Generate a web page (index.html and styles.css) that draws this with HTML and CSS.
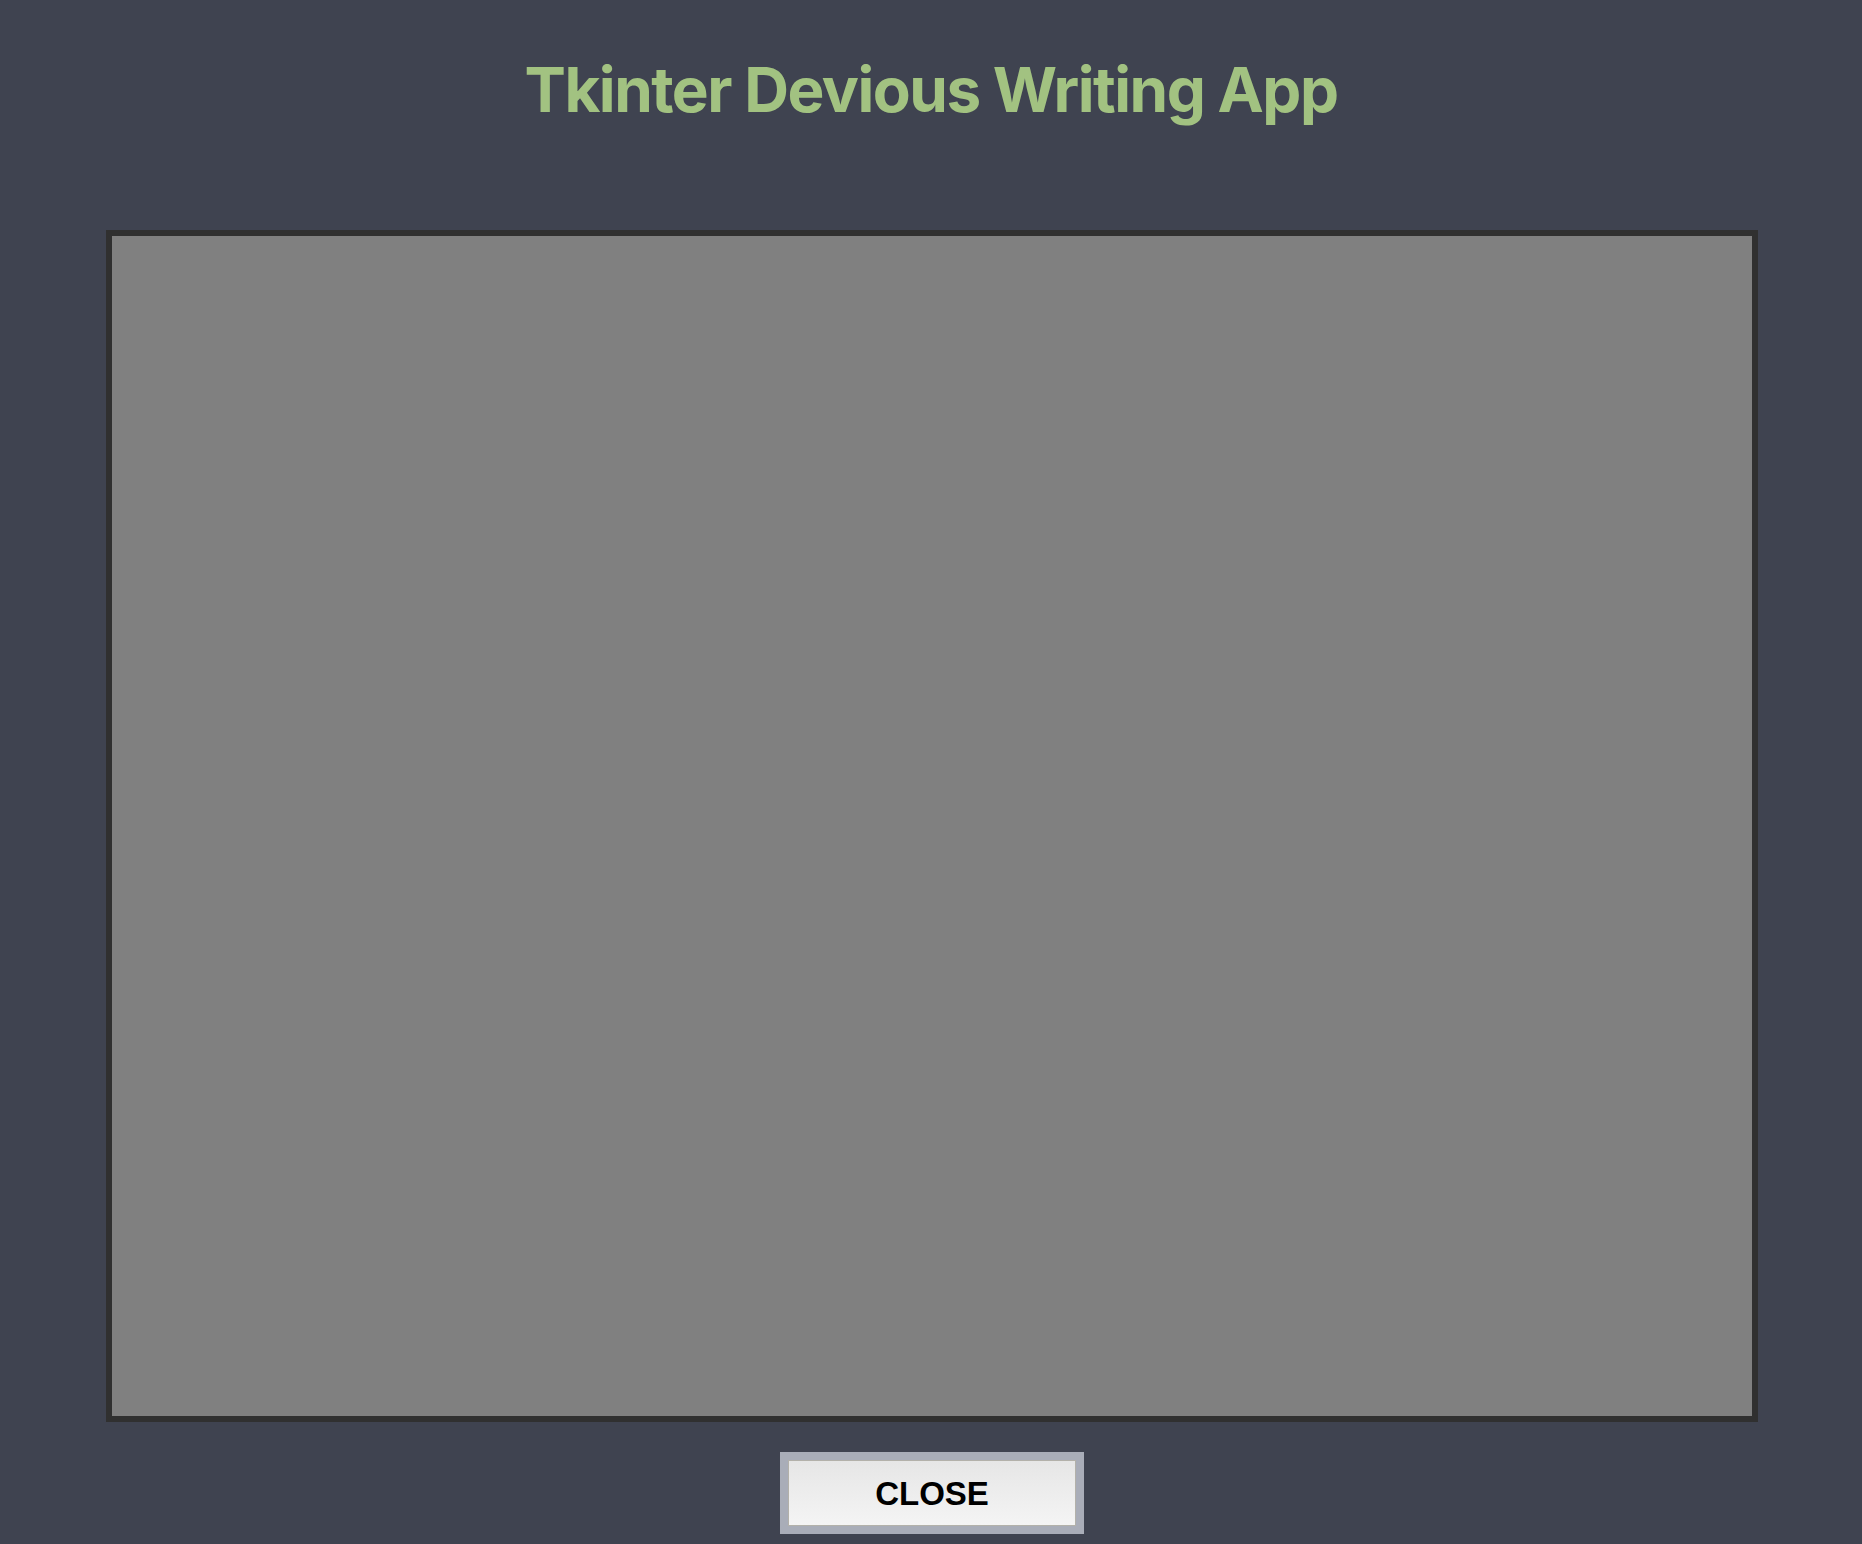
FILE: index.html
```html
<!DOCTYPE html>
<html>
<head>
<meta charset="utf-8">
<link rel="stylesheet" href="styles.css">
</head>
<body>
<div class="app">
  <h1 class="title">Tkinter Devious Writing App</h1>
  <div class="editor"></div>
  <div class="actions">
    <button class="close-btn"><span class="close-face">CLOSE</span></button>
  </div>
</div>
</body>
</html>
```

FILE: styles.css
```css
html, body {
  margin: 0;
  padding: 0;
  background: #3f4350;
}
.app {
  width: 1862px;
  height: 1544px;
  display: flex;
  flex-direction: column;
  align-items: center;
  overflow: hidden;
}
.title {
  margin: 0;
  padding-top: 52px;
  height: 230px;
  flex-shrink: 0;
  box-sizing: border-box;
  font-family: Inter, "Liberation Sans", sans-serif;
  font-weight: 700;
  font-size: 62px;
  line-height: 76px;
  color: #a2c281;
  letter-spacing: -1.5px;
}
.editor {
  width: 1652px;
  height: 1192px;
  flex-shrink: 0;
  box-sizing: border-box;
  border: 6px solid #303030;
  background: #808080;
  margin-left: 2px;
}
.actions {
  margin-top: 30px;
  margin-left: 2px;
}
.close-btn {
  display: block;
  width: 304px;
  height: 82px;
  padding: 0;
  border: 8px solid #a9adb8;
  background: #a9adb8;
  box-sizing: border-box;
}
.close-face {
  display: flex;
  align-items: center;
  justify-content: center;
  height: 100%;
  box-sizing: border-box;
  border: 1px solid #b3b1aa;
  background: linear-gradient(#e6e6e6, #f4f4f4);
  font-family: "Liberation Sans", Arial, sans-serif;
  font-weight: 700;
  font-size: 33px;
  color: #000;
  padding-top: 2px;
}
```
